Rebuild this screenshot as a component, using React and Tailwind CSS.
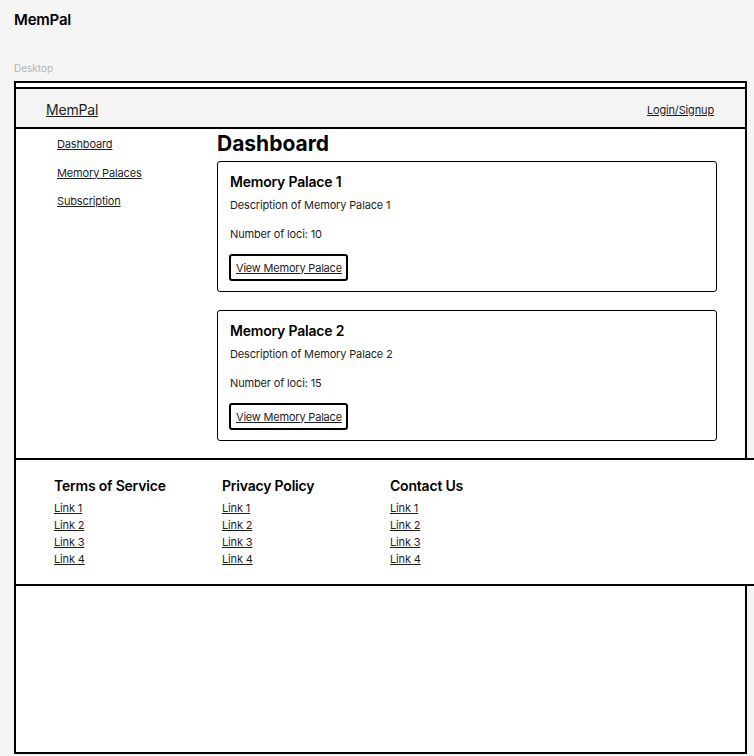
const palaces = [
  { id: 1, name: 'Memory Palace 1', description: 'Description of Memory Palace 1', loci: 10 },
  { id: 2, name: 'Memory Palace 2', description: 'Description of Memory Palace 2', loci: 15 },
];

const footerCols = ['Terms of Service', 'Privacy Policy', 'Contact Us'];

function PalaceCard({ palace }) {
  return (
    <div className="border-[1.5px] border-black rounded-[3px] bg-white px-[12px] pt-[10px] pb-[10px]">
      <h2 className="text-[14px] leading-[20px] font-semibold tracking-[-0.2px] text-black">{palace.name}</h2>
      <p className="mt-[5px] text-[11px] leading-[16px] tracking-[-0.15px] text-[#1e1e1e]">{palace.description}</p>
      <p className="mt-[13px] text-[11px] leading-[16px] tracking-[-0.15px] text-[#1e1e1e]">Number of loci: {palace.loci}</p>
      <button className="-ml-[1px] mt-[12px] border-2 border-black rounded-[3px] pl-[5px] pr-[4px] py-[3.5px] text-[11px] leading-[16px] tracking-[-0.2px] underline text-[#1e1e1e] bg-white">
        View Memory Palace
      </button>
    </div>
  );
}

export default function App() {
  return (
    <div className="w-[754px] h-[756px] overflow-hidden bg-[#f5f5f5] font-['Inter',sans-serif] text-black">
      <div className="px-[14px] pt-[10px] text-[15px] leading-[20px] font-semibold tracking-[-0.2px]">MemPal</div>
      <div className="px-[14px] mt-[31px] text-[10px] leading-[14px] text-[#b3b3b3]">Desktop</div>

      <div className="ml-[14px] mt-[6px] w-[733px] h-[673px] border-2 border-black bg-white">
        <div className="mt-[4px] h-[42px] border-y-2 border-black bg-[#f4f4f4] flex items-center justify-between pt-[3px] pl-[30px] pr-[31px]">
          <a className="text-[14px] leading-[20px] tracking-[-0.2px] underline text-[#1e1e1e]">MemPal</a>
          <a className="text-[11px] leading-[16px] tracking-[-0.15px] underline text-[#1e1e1e]">Login/Signup</a>
        </div>

        <div className="flex">
          <nav className="w-[201px] shrink-0 pl-[41px] pt-[7px] flex flex-col gap-[12.5px]">
            <a className="text-[11px] leading-[16px] tracking-[-0.15px] underline text-[#1e1e1e]">Dashboard</a>
            <a className="text-[11px] leading-[16px] tracking-[-0.15px] underline text-[#1e1e1e]">Memory Palaces</a>
            <a className="text-[11px] leading-[16px] tracking-[-0.15px] underline text-[#1e1e1e]">Subscription</a>
          </nav>
          <main className="w-[500px] pb-[17px]">
            <h1 className="text-[21px] leading-[28px] font-bold mt-[1px]">Dashboard</h1>
            <div className="mt-[3px] flex flex-col gap-[18px]">
              {palaces.map((p) => (
                <PalaceCard key={p.id} palace={p} />
              ))}
            </div>
          </main>
        </div>

        <footer className="relative -ml-[2px] w-[742px] h-[128px] border-y-2 border-l-2 border-black bg-white pl-[38px] pt-[16px] flex">
          {footerCols.map((title) => (
            <div key={title} className="w-[168px]">
              <h3 className="text-[14px] leading-[20px] font-semibold tracking-[-0.2px]">{title}</h3>
              <ul className="mt-[4px] flex flex-col">
                {[1, 2, 3, 4].map((n) => (
                  <li key={n} className="text-[11px] leading-[17px] tracking-[-0.15px] underline text-[#1e1e1e]">Link {n}</li>
                ))}
              </ul>
            </div>
          ))}
        </footer>
      </div>
    </div>
  );
}
